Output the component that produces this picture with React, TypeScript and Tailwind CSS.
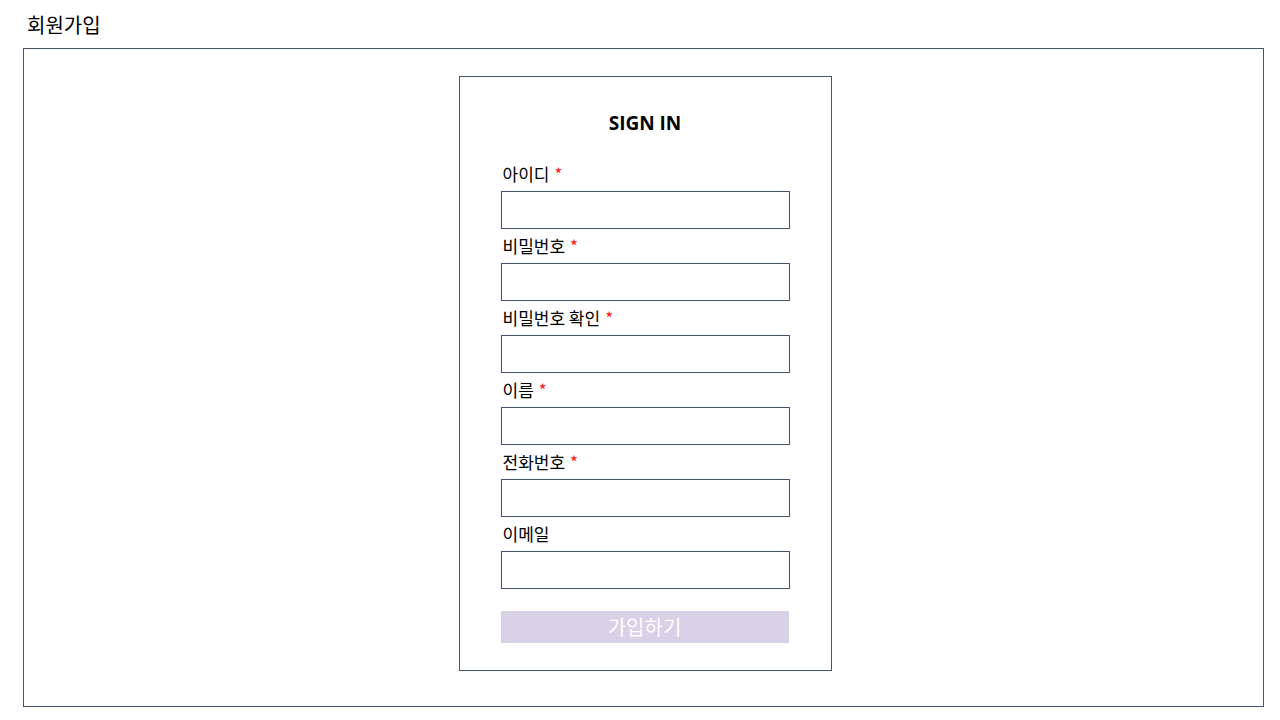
import React from "react";

const fields = [
    { label: "아이디", required: true, type: "text" },
    { label: "비밀번호", required: true, type: "password" },
    { label: "비밀번호 확인", required: true, type: "password" },
    { label: "이름", required: true, type: "text" },
    { label: "전화번호", required: true, type: "text" },
    { label: "이메일", required: false, type: "email" },
];

const App = () => {
    return (
        <div className="min-h-screen bg-white text-black font-['Noto_Sans_CJK_KR','Noto_Sans',sans-serif]">
            <div className="h-[48px] pl-[27px] pt-[12px] text-[20px] leading-[26px]">회원가입</div>

            <div className="ml-[23px] w-[1241px] h-[659px] border border-[#44546a] flex justify-center pl-[3px]">
                <div className="mt-[27px] w-[373px] h-[595px] border border-[#44546a] px-[41px]">
                    <h2 className="pt-[32px] text-center text-[19px] leading-[28px] font-bold font-['Open_Sans','Noto_Sans_CJK_KR',sans-serif]">
                        SIGN IN
                    </h2>

                    <form className="mt-[25px]" onSubmit={(e) => e.preventDefault()}>
                        {fields.map((f) => (
                            <div key={f.label} className="mb-[5px]">
                                <label className="block h-[24px] pl-[2px] text-[17px] leading-[24px]">
                                    {f.label}
                                    {f.required && <span className="ml-[5px] text-[#ff1a1a]">*</span>}
                                </label>
                                <input
                                    type={f.type}
                                    className="mt-[5px] block w-[289px] h-[38px] border border-[#44546a] outline-none px-2"
                                />
                            </div>
                        ))}

                        {/* 가입 버튼 */}
                        <button
                            type="submit"
                            className="mt-[22px] block w-[288px] h-[32px] bg-[#d9d1e8] text-white text-[20px] leading-[32px] text-center"
                        >
                            가입하기
                        </button>
                    </form>
                </div>
            </div>
        </div>
    );
};

export default App;
